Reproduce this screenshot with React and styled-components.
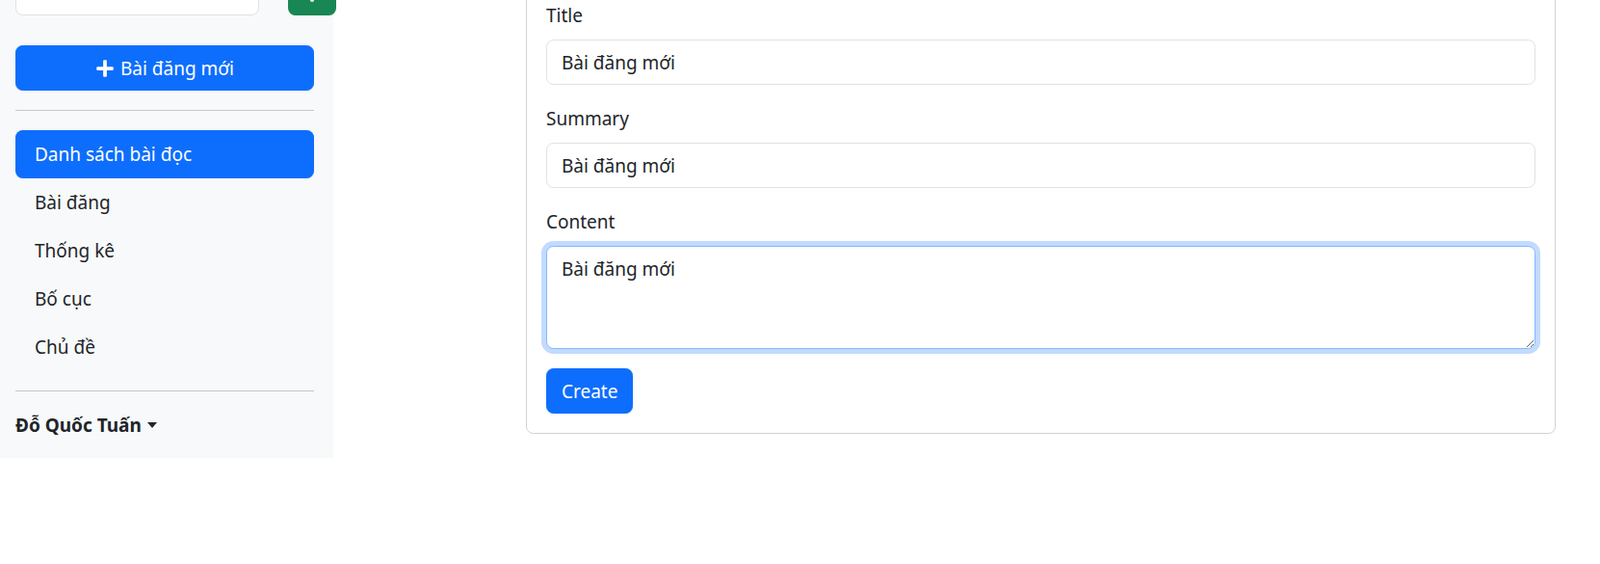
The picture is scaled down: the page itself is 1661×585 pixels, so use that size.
import styled, { createGlobalStyle } from "styled-components";
import { FaPlus } from "react-icons/fa";

const GlobalStyle = createGlobalStyle`
  * {
    box-sizing: border-box;
  }
  body {
    margin: 0;
    font-family: "Noto Sans", "Open Sans", sans-serif;
    font-size: 19px;
    line-height: 30px;
    color: #212529;
    background: #fff;
  }
`;

const menu = ["Danh sách bài đọc", "Bài đăng", "Thống kê", "Bố cục", "Chủ đề"];

const fields = [
  { label: "Title", value: "Bài đăng mới" },
  { label: "Summary", value: "Bài đăng mới" },
];

function App() {
  return (
    <>
      <GlobalStyle />
      <Page>
        <Sidebar>
          <SearchRow>
            <SearchInput type="text" />
            <IconButton type="button">
              <FaPlus />
            </IconButton>
          </SearchRow>

          <PrimaryButton type="button" $block>
            <FaPlus /> Bài đăng mới
          </PrimaryButton>

          <Divider />

          <NavList>
            {menu.map((item, i) => (
              <NavLink key={item} href="#" $active={i === 0}>
                {item}
              </NavLink>
            ))}
          </NavList>

          <Divider />

          <UserToggle href="#">Đỗ Quốc Tuấn</UserToggle>
        </Sidebar>

        <Main>
          <Card>
            {fields.map((f) => (
              <FormGroup key={f.label}>
                <Label>{f.label}</Label>
                <Input type="text" defaultValue={f.value} />
              </FormGroup>
            ))}
            <FormGroup>
              <Label>Content</Label>
              <TextArea rows={3} defaultValue="Bài đăng mới" $focused />
            </FormGroup>
            <PrimaryButton type="button">Create</PrimaryButton>
          </Card>
        </Main>
      </Page>
    </>
  );
}

export default App;

/* page is shown scrolled a little, so the top row is cut off */
const Page = styled.div`
  display: flex;
  align-items: flex-start;
  margin-top: -51px;
`;

const Sidebar = styled.aside`
  width: 346px;
  flex-shrink: 0;
  background: #f8f9fa;
  padding: 20px 20px 19px 16px;
`;

const SearchRow = styled.div`
  display: flex;
  gap: 30px;
  width: 333px;
  margin-bottom: 31px;
`;

const SearchInput = styled.input`
  width: 253px;
  min-width: 0;
  flex: none;
  height: 47px;
  border: 1px solid #dee2e6;
  border-radius: 7.5px;
  background: #fff;
  font: inherit;
  padding: 7.5px 15px;
`;

const IconButton = styled.button`
  width: 50px;
  flex: none;
  height: 47px;
  border: none;
  border-radius: 7.5px;
  background: #198754;
  color: #fff;
  font-size: 20px;
  display: flex;
  align-items: center;
  justify-content: center;
  padding: 0;
`;

const PrimaryButton = styled.button`
  display: ${(p) => (p.$block ? "flex" : "inline-flex")};
  width: ${(p) => (p.$block ? "100%" : "auto")};
  align-items: center;
  justify-content: center;
  gap: 6px;
  padding: 7.5px 15px;
  border: 1px solid #0d6efd;
  border-radius: 7.5px;
  background: #0d6efd;
  color: #fff;
  font: inherit;
  line-height: 30px;

  svg {
    font-size: 20px;
  }
`;

const Divider = styled.hr`
  margin: 20px 0;
  border: 0;
  border-top: 1px solid #c6c7c8;
`;

const NavList = styled.nav`
  display: flex;
  flex-direction: column;
`;

const NavLink = styled.a`
  display: block;
  padding: 10px 20px;
  border-radius: 7.5px;
  text-decoration: none;
  color: ${(p) => (p.$active ? "#fff" : "#212529")};
  background: ${(p) => (p.$active ? "#0d6efd" : "transparent")};
`;

const UserToggle = styled.a`
  display: inline-flex;
  align-items: center;
  font-weight: 700;
  color: #212529;
  text-decoration: none;

  &::after {
    content: "";
    margin-left: 6px;
    border-top: 6px solid;
    border-left: 5px solid transparent;
    border-right: 5px solid transparent;
  }
`;

const Main = styled.main`
  flex: 1;
  padding: 31px 46px 0 200px;
`;

const Card = styled.div`
  border: 1px solid rgba(0, 0, 0, 0.175);
  border-radius: 7.5px;
  padding: 20px;
`;

const FormGroup = styled.div`
  margin-bottom: 20px;
`;

const Label = styled.label`
  display: block;
  margin-bottom: 10px;
`;

const Input = styled.input`
  display: block;
  width: 100%;
  height: 47px;
  padding: 7.5px 15px;
  border: 1px solid #dee2e6;
  border-radius: 7.5px;
  font: inherit;
  color: #212529;
  background: #fff;
`;

const TextArea = styled.textarea`
  display: block;
  width: 100%;
  height: 107px;
  padding: 7.5px 15px;
  border: 1px solid ${(p) => (p.$focused ? "#86b7fe" : "#dee2e6")};
  border-radius: 7.5px;
  font: inherit;
  color: #212529;
  resize: vertical;
  outline: none;
  box-shadow: ${(p) =>
    p.$focused ? "0 0 0 5px rgba(13, 110, 253, 0.25)" : "none"};
`;
